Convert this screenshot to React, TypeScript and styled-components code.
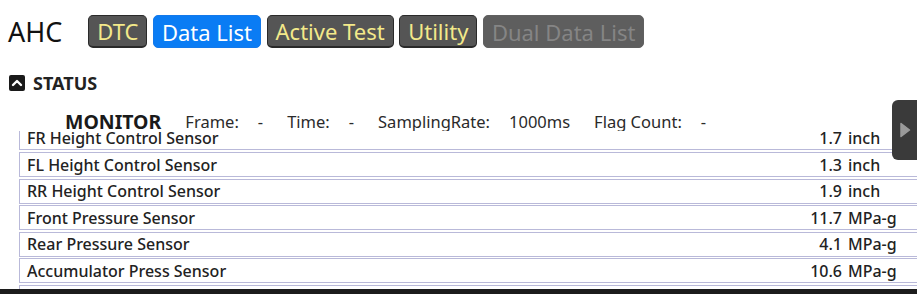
import React from 'react';
import styled, { createGlobalStyle } from 'styled-components';

const GlobalStyle = createGlobalStyle`
  html, body {
    margin: 0;
    padding: 0;
    background: #ffffff;
    overflow: hidden;
  }
  body {
    font-family: "Noto Sans", "Open Sans", sans-serif;
    color: #1e1e1e;
  }
`;

// Page frame
const Page = styled.div`
  position: relative;
  width: 917px;
  height: 294px;
  display: flex;
  flex-direction: column;
  overflow: hidden;
`;

const Header = styled.div`
  display: flex;
  align-items: center;
  padding: 15px 0 0 8px;
  height: 33px;
`;

const SystemName = styled.div`
  font-size: 27px;
  line-height: 1;
  margin-right: 26px;
  color: #111;
`;

const TabGroup = styled.div`
  display: flex;
  gap: 5.5px;
`;

type TabKind = 'normal' | 'active' | 'disabled';

const Tab = styled.button<{ $kind: TabKind }>`
  height: 33px;
  padding: 0 8px;
  border-radius: 5px;
  font-family: "Noto Sans", "Open Sans", sans-serif;
  font-size: 22px;
  line-height: 1;
  cursor: pointer;
  border: 1px solid ${p => (p.$kind === 'active' ? '#1479ea' : p.$kind === 'disabled' ? '#606060' : '#2a2a2a')};
  border-bottom-width: ${p => (p.$kind === 'normal' ? '2px' : '1px')};
  background: ${p => (p.$kind === 'active' ? '#0a7cf4' : p.$kind === 'disabled' ? '#5e5e5e' : '#555555')};
  color: ${p => (p.$kind === 'active' ? '#ffffff' : p.$kind === 'disabled' ? '#858585' : '#f3e98a')};
`;

const SectionTitle = styled.div`
  display: flex;
  align-items: center;
  gap: 8px;
  margin: 27px 0 0 9px;
  height: 16px;
  font-size: 18px;
  font-weight: bold;
  color: #222;
`;

const MonitorBar = styled.div`
  display: flex;
  align-items: center;
  gap: 24px;
  margin-top: 20px;
  padding-left: 65px;
  height: 20px;
  font-size: 16.5px;
  color: #2a2a2a;
`;

const MonitorTitle = styled.span`
  font-size: 19.5px;
  font-weight: bold;
  color: #1a1a1a;
`;

const Field = styled.span`
  display: flex;
  gap: 19px;
`;

const ListViewport = styled.div`
  flex: 1;
  overflow: hidden;
  margin-left: 19px;
`;

const List = styled.div`
  margin-top: -5.6px;
`;

const Row = styled.div`
  box-sizing: border-box;
  width: 911px;
  height: 25px;
  margin-bottom: 1.6px;
  border: 1px solid #b9b9d9;
  padding-left: 7px;
  display: grid;
  grid-template-columns: 1fr 90px 81px;
  align-items: center;
  font-size: 16px;
  font-weight: 500;
  color: #222;
  background: #fff;
`;

const ItemName = styled.span`
  white-space: nowrap;
`;

const ItemValue = styled.span`
  text-align: right;
  padding-right: 6px;
`;

const ItemUnit = styled.span`
  white-space: nowrap;
`;

const BottomBar = styled.div`
  height: 5px;
  background: #1c1c1c;
`;

const SideHandle = styled.div`
  position: absolute;
  top: 100px;
  right: 0;
  width: 25px;
  height: 60px;
  border-radius: 6px 0 0 6px;
  background: #3a3a3a;
  display: flex;
  align-items: center;
  justify-content: center;
`;

const CollapseIcon = () => (
  <svg width="16" height="16" viewBox="0 0 16 16">
    <rect x="0" y="0" width="16" height="16" rx="2" fill="#1a1a1a" />
    <polyline points="4,10 8,6 12,10" fill="none" stroke="#fff" strokeWidth="2.4" strokeLinecap="round" strokeLinejoin="round" />
  </svg>
);

const tabs: { label: string; kind: TabKind }[] = [
  { label: 'DTC', kind: 'normal' },
  { label: 'Data List', kind: 'active' },
  { label: 'Active Test', kind: 'normal' },
  { label: 'Utility', kind: 'normal' },
  { label: 'Dual Data List', kind: 'disabled' },
];

const rows = [
  { name: 'FR Height Control Sensor', value: '1.7', unit: 'inch' },
  { name: 'FL Height Control Sensor', value: '1.3', unit: 'inch' },
  { name: 'RR Height Control Sensor', value: '1.9', unit: 'inch' },
  { name: 'Front Pressure Sensor', value: '11.7', unit: 'MPa-g' },
  { name: 'Rear Pressure Sensor', value: '4.1', unit: 'MPa-g' },
  { name: 'Accumulator Press Sensor', value: '10.6', unit: 'MPa-g' },
  { name: 'Vehicle Speed', value: '0', unit: 'km/h' },
];

const App: React.FC = () => {
  return (
    <Page>
      <GlobalStyle />
      <Header>
        <SystemName>AHC</SystemName>
        <TabGroup>
          {tabs.map(t => (
            <Tab key={t.label} $kind={t.kind}>{t.label}</Tab>
          ))}
        </TabGroup>
      </Header>

      <SectionTitle>
        <CollapseIcon />
        STATUS
      </SectionTitle>

      <MonitorBar>
        <MonitorTitle>MONITOR</MonitorTitle>
        <Field><span>Frame:</span><span>-</span></Field>
        <Field><span>Time:</span><span>-</span></Field>
        <Field><span>SamplingRate:</span><span>1000ms</span></Field>
        <Field><span>Flag Count:</span><span>-</span></Field>
      </MonitorBar>

      <ListViewport>
        <List>
          {rows.map(r => (
            <Row key={r.name}>
              <ItemName>{r.name}</ItemName>
              <ItemValue>{r.value}</ItemValue>
              <ItemUnit>{r.unit}</ItemUnit>
            </Row>
          ))}
        </List>
      </ListViewport>

      <BottomBar />

      <SideHandle>
        <svg width="12" height="16" viewBox="0 0 12 16">
          <path d="M2 1.5 L10.5 8 L2 14.5 Z" fill="#9a9a9a" stroke="#9a9a9a" strokeWidth="1.5" strokeLinejoin="round" />
        </svg>
      </SideHandle>
    </Page>
  );
};

export default App;
